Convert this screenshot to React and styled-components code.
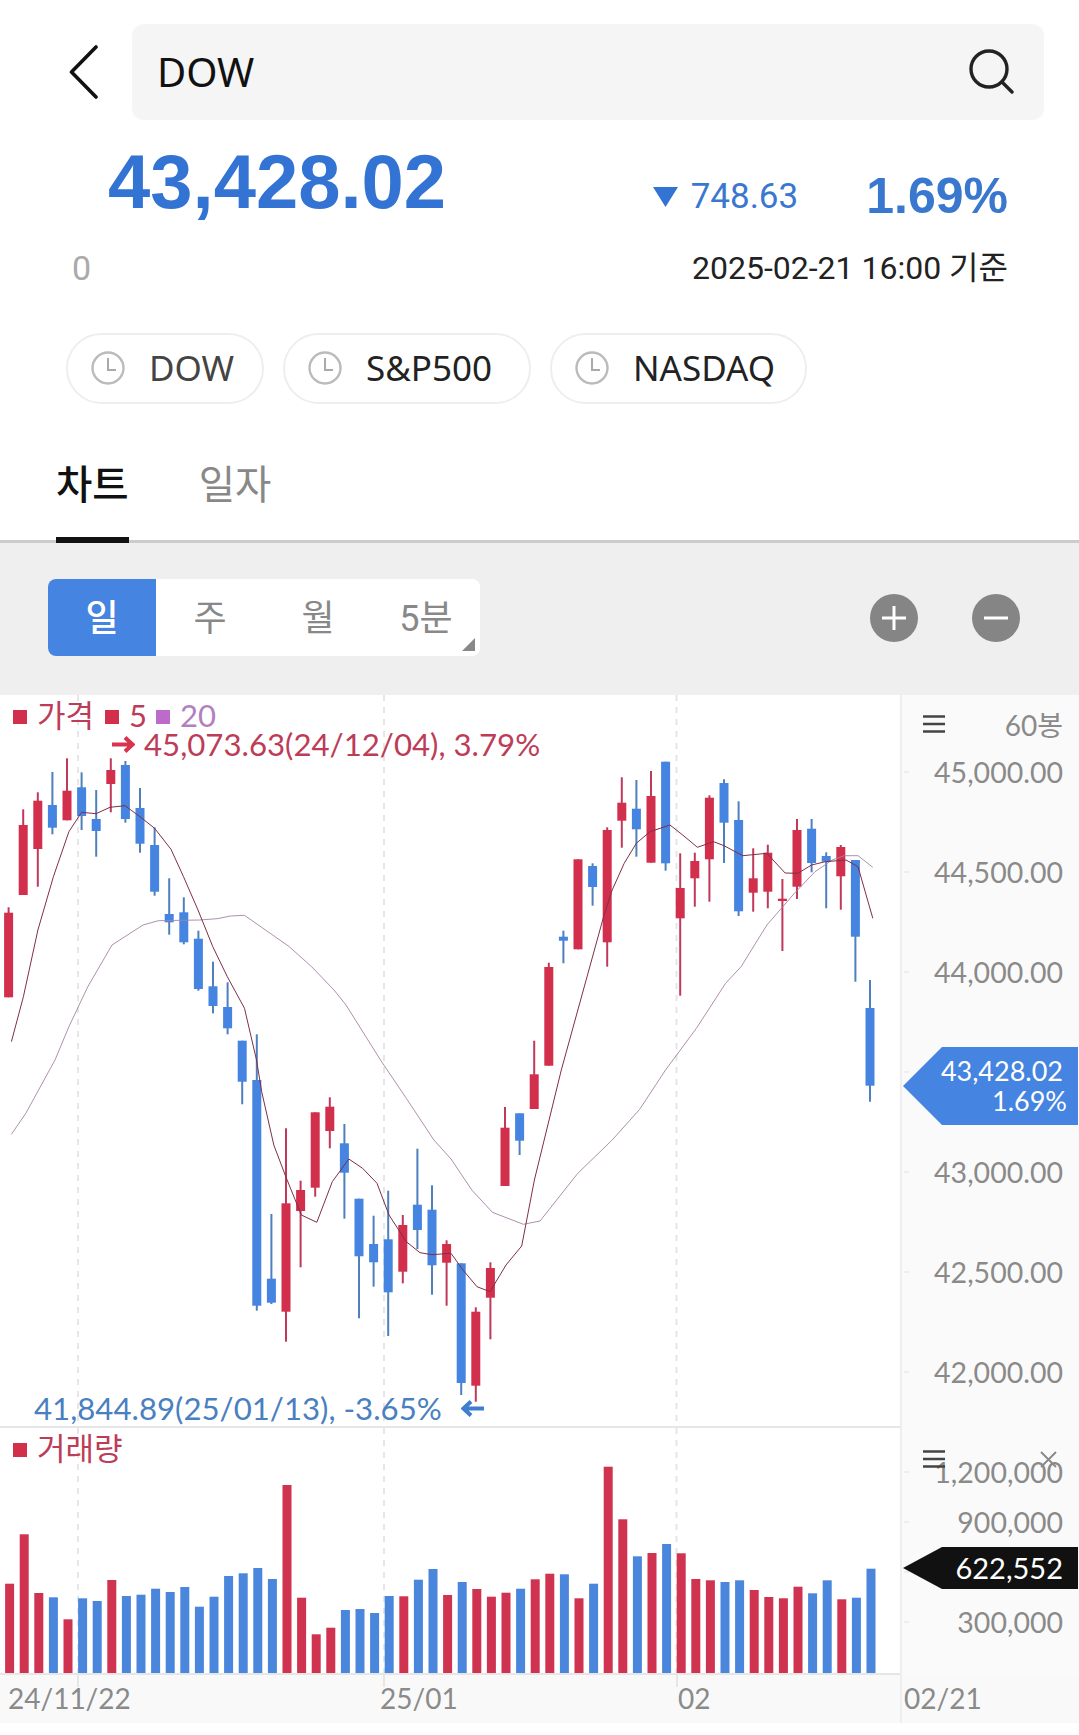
import React from 'react';
import styled, { createGlobalStyle } from 'styled-components';

const BLUE = '#4584e0';
const RED = '#d22f4d';
const INK_BLUE = '#3373d3';

const GlobalStyle = createGlobalStyle`
  * { box-sizing: border-box; }
  html, body { margin: 0; padding: 0; background: #ffffff; }
  body { font-family: Roboto, "Noto Sans CJK KR", sans-serif; }
`;

const Page = styled.div`
  width: 1079px;
  height: 1735px;
  overflow: hidden;
  background: #ffffff;
`;

//HEADER
const Header = styled.div`
  display: flex;
  align-items: center;
  gap: 34px;
  padding: 24px 35px 0 69px;
`;

const SearchBox = styled.div`
  flex: 1;
  height: 96px;
  display: flex;
  align-items: center;
  justify-content: space-between;
  padding: 0 30px 2px 25px;
  background: #f5f5f5;
  border-radius: 12px;
  font-family: "Noto Sans", sans-serif;
  font-size: 40px;
  color: #111111;
`;

//PRICE
const PriceRow = styled.div`
  height: 110px;
  display: flex;
  align-items: flex-start;
  padding: 0 71px 0 108px;
`;

const BigPrice = styled.div`
  margin-top: 24px;
  font-family: "Liberation Sans", sans-serif;
  font-size: 76px;
  line-height: 1;
  font-weight: 700;
  color: ${INK_BLUE};
`;

const DownMark = styled.svg`
  margin: 67px 13px 0 auto;
`;

const Change = styled.div`
  margin-top: 59px;
  font-size: 35px;
  line-height: 1;
  color: #3a78d0;
`;

const Percent = styled.div`
  margin: 51px 0 0 68px;
  font-family: "Liberation Sans", sans-serif;
  font-size: 50px;
  line-height: 1;
  font-weight: 700;
  color: #3a78d0;
`;

const StatusRow = styled.div`
  margin-top: 22px;
  height: 31px;
  display: flex;
  justify-content: space-between;
  padding: 0 71px 0 72px;
  font-size: 32px;
  line-height: 1;
  color: #222222;
`;

const Zero = styled.span`
  margin-top: -1px;
  font-size: 34px;
  color: #aaaaaa;
`;

//PILLS
const PillRow = styled.div`
  margin-top: 50px;
  display: flex;
  gap: 19px;
  padding-left: 66px;
`;

const Pill = styled.div`
  width: ${props => props.$w}px;
  height: 71px;
  display: flex;
  align-items: center;
  gap: 24px;
  padding: 0 0 2px 23px;
  border: 2px solid #eeeeee;
  border-radius: 36px;
  font-family: "Noto Sans", sans-serif;
  font-size: 35px;
  color: ${props => props.$dim ? '#444444' : '#222222'};
`;

//TABS
const Tabs = styled.div`
  height: 139px;
  display: flex;
  gap: 70px;
  padding-left: 56px;
  border-bottom: 3px solid #cccccc;
`;

const Tab = styled.div`
  height: 139px;
  padding-top: 60px;
  font-size: 39.5px;
  line-height: 44px;
  font-weight: ${props => props.$active ? 500 : 400};
  color: ${props => props.$active ? '#111111' : '#888888'};
  border-bottom: ${props => props.$active ? '6px solid #111111' : 'none'};
`;

//TOOLBAR
const Toolbar = styled.div`
  height: 152px;
  display: flex;
  align-items: flex-start;
  justify-content: space-between;
  padding: 36px 59px 0 48px;
  background: #efefef;
`;

const Segments = styled.div`
  position: relative;
  width: 432px;
  height: 77px;
  display: flex;
  border-radius: 8px;
  overflow: hidden;
  background: #ffffff;

  &::after {
    content: '';
    position: absolute;
    right: 5px;
    bottom: 5px;
    width: 0;
    height: 0;
    border-left: 13px solid transparent;
    border-bottom: 13px solid #888888;
  }
`;

const Segment = styled.div`
  width: 108px;
  display: flex;
  align-items: center;
  justify-content: center;
  font-size: 36px;
  padding-bottom: 5px;
  background: ${props => props.$active ? BLUE : 'transparent'};
  color: ${props => props.$active ? '#ffffff' : '#888888'};
  font-weight: ${props => props.$active ? 500 : 400};
`;

const ZoomButtons = styled.div`
  display: flex;
  gap: 54px;
  padding-top: 15px;
`;

const ZoomButton = styled.div`
  width: 48px;
  height: 48px;
  border-radius: 50%;
  background: #858585;
  display: flex;
  align-items: center;
  justify-content: center;
`;

//CHART
const Chart = styled.div`
  display: grid;
  grid-template-columns: 900px 179px;
  grid-template-rows: 733px 247px 48px;
  font-family: Lato, "Noto Sans CJK KR", sans-serif;
`;

const Plot = styled.div`
  position: relative;
  border-bottom: 2px solid #e6e6e6;

  svg { display: block; }
`;

const Axis = styled.div`
  position: relative;
  padding-top: ${props => props.$pad}px;
  background: #fafafa;
  border-left: 2px solid #eeeeee;
`;

const AxisTick = styled.div`
  position: relative;
  height: ${props => props.$h}px;
  display: flex;
  align-items: center;
  justify-content: flex-end;
  padding-right: 16px;
  font-size: 28.5px;
  color: #8a8a8a;

  &::before {
    content: '';
    position: absolute;
    left: 2px;
    top: 50%;
    width: 5px;
    height: 2px;
    margin-top: -1px;
    background: #eeeeee;
  }
`;

const AxisHead = styled.div`
  position: absolute;
  left: 21px;
  right: ${props => props.$right}px;
  top: ${props => props.$top}px;
  height: 24px;
  display: flex;
  align-items: center;
  justify-content: space-between;
  font-size: 28px;
  color: #8a8a8a;
`;

const PriceTag = styled.div`
  position: absolute;
  left: 1px;
  top: ${props => props.$top}px;
  width: 175px;
  height: ${props => props.$h}px;
  padding-right: 15px;
  display: flex;
  flex-direction: column;
  align-items: flex-end;
  justify-content: center;
  background: ${props => props.$bg};
  clip-path: polygon(0 50%, 39px 0, 100% 0, 100% 100%, 39px 100%);
  color: #ffffff;
  font-size: ${props => props.$size}px;
  line-height: 30px;
`;

const TagPercent = styled.span`
  margin-right: -4px;
`;

const Legend = styled.div`
  position: absolute;
  left: 13px;
  top: 3px;
  display: flex;
  align-items: center;
  font-size: 31px;
  line-height: 34px;
  color: #bd3c58;
`;

const LegendMark = styled.i`
  width: 14px;
  height: 14px;
  margin: 4px 10px 0 ${props => props.$gap || 0}px;
  background: ${props => props.$color};
`;

const LegendText = styled.span`
  color: ${props => props.$color || 'inherit'};
`;

const PeakLabel = styled.div`
  position: absolute;
  left: ${props => props.$left}px;
  top: ${props => props.$top}px;
  display: flex;
  align-items: center;
  gap: ${props => props.$gap}px;
  font-size: 31.2px;
  line-height: 34px;
  white-space: nowrap;
  color: ${props => props.$color};
`;

const TimeAxis = styled.div`
  position: relative;
  background: #f9f9f9;
  font-size: 28px;
  color: #8a8a8a;
`;

const TimeLabel = styled.span`
  position: absolute;
  left: ${props => props.$x}px;
  top: 6px;
  line-height: 34px;
`;

const TimeGrid = styled.i`
  position: absolute;
  left: ${props => props.$x}px;
  top: 0;
  width: 2px;
  height: 12px;
  background: #e6e6e6;
`;

const EndAxis = styled(TimeAxis)`
  border-left: 2px solid #eeeeee;
`;

const EndLabel = styled(TimeLabel)`
  left: 2px;
`;

// [colour, wick top, body top, body bottom, wick bottom], in page pixels
const candles = [
  ['r', 907.3, 912.7, 997.3, 997.3], ['r', 809.3, 825, 895, 895], ['r', 792.3, 800.7, 849, 886.7],
  ['b', 772, 805, 827.7, 834.3], ['r', 758.3, 790.7, 820.3, 820.3], ['b', 772.3, 787.3, 816, 830],
  ['b', 790, 819, 831, 856.7], ['r', 758.3, 770, 784, 812.3], ['b', 761, 765, 819, 822.7],
  ['b', 788, 808, 843.7, 852.7], ['b', 827.3, 845, 891.7, 895.7], ['b', 878.3, 914, 922.3, 934.7],
  ['b', 897.3, 912.3, 942.3, 944.3], ['b', 930.7, 938.7, 989, 990.7], ['b', 961.7, 986.3, 1006, 1013.3],
  ['b', 982.3, 1007, 1028.3, 1034.3], ['b', 1040.7, 1040.7, 1081.7, 1104.3], ['b', 1034.3, 1080, 1305.7, 1310.7],
  ['b', 1214, 1278.7, 1302.7, 1304], ['r', 1128.3, 1203.3, 1311.7, 1341.7], ['r', 1180.7, 1190, 1211, 1267.3],
  ['r', 1112.3, 1112.3, 1187.7, 1196.7], ['r', 1097.3, 1106.7, 1131, 1148.3], ['b', 1124, 1143.3, 1172.7, 1218.7],
  ['b', 1198.7, 1198.7, 1256.3, 1318.3], ['b', 1215.7, 1244, 1262.3, 1286.7], ['b', 1190.7, 1239.3, 1292.3, 1336],
  ['r', 1215, 1225, 1271.7, 1283.3], ['b', 1148.7, 1204.7, 1230, 1249], ['b', 1185.3, 1209.7, 1265.3, 1294.7],
  ['r', 1240.3, 1244, 1262.7, 1305.7], ['b', 1263.3, 1263.3, 1383, 1395], ['r', 1307.3, 1311.7, 1385.7, 1401.7],
  ['r', 1262.3, 1268, 1297.7, 1339.3], ['r', 1107, 1127.7, 1186, 1186], ['b', 1113.3, 1113.3, 1140.7, 1155],
  ['r', 1040.7, 1074.3, 1109, 1109], ['r', 962.7, 967, 1065.7, 1065.7], ['b', 930.7, 936.7, 940.7, 963.3],
  ['r', 859.3, 859.3, 949.3, 949.3], ['b', 863.3, 866, 887, 905.7], ['r', 827.3, 830, 942.3, 966.7],
  ['r', 777.3, 802.7, 820.7, 847.7], ['b', 780, 808.7, 829.3, 856.7], ['r', 771, 796, 862.7, 862.7],
  ['b', 761.7, 761.7, 863.3, 870.7], ['r', 853.3, 888, 918.3, 995.7], ['r', 852.7, 861, 878.3, 906.7],
  ['r', 795.3, 797.7, 859.3, 901.7], ['b', 779.3, 783, 822.7, 863], ['b', 801.3, 820, 911.3, 916],
  ['r', 848.3, 878.3, 892.7, 911.7], ['r', 844.7, 852.7, 891.7, 908.3], ['r', 879, 898.7, 901, 951],
  ['r', 819, 830, 886.7, 899], ['b', 819, 828.7, 863, 872.3], ['b', 852.3, 856, 861.7, 908.3],
  ['r', 845, 847, 876.3, 909.7], ['b', 860, 860, 936.7, 981.7], ['b', 980, 1008, 1085.7, 1101.7],
];

const ma5 = '11.4,1041.7 23.4,996.7 37.9,930 53.4,876.7 68.9,831.7 81.6,812.3 96,813.7 110,807.3 125,805.7 140,816.7 154.6,828.3 171,849.3 183.5,876.7 198,910 212.8,946.7 227.3,976.7 244.5,1008.3 256.5,1060 261.7,1091.7 273.8,1145 285.8,1176.7 301.3,1215 316.8,1222.3 332.3,1181.7 348.8,1159 362.6,1168.3 377,1183.3 389,1215 406.3,1241.7 420,1252.7 432,1254.7 451,1253.3 463,1270 477,1286.7 490,1291.7 506,1265 521.7,1246 534.4,1180 561.3,1070 603.6,916.7 612.2,890 624.2,863.3 636.3,843.3 650,831.7 670,825 682.7,835 697.4,847.3 713.6,841.7 724,845.7 742.8,855.7 766.9,853.3 785.1,873 797.8,873.3 811.6,865 825.3,861.7 846,860 858,866.7 872.8,918.3';

const ma20 = '11.4,1134.3 25.8,1113.3 55,1060 68.9,1026.7 87.8,986.7 112,945 143,925 158.4,920.7 199.7,920 217,918.7 230.7,916 244.5,915.3 289.3,946.7 311.6,966.7 334,990 346,1005 380.5,1060 406.3,1098.3 433.9,1140 451,1159 471.8,1190 492.4,1212.3 523.4,1224.3 540,1221 577.8,1173.3 612.2,1140 639.7,1109.3 665.5,1070 696.4,1028.3 725.6,983.3 741.1,966.7 766.9,925 794.4,893.3 815,871.7 832.2,860 844.2,855.7 858,855.7 872.8,867.3';

// [colour, bar top]
const volumes = [
  ['r', 1583.7], ['r', 1534.3], ['r', 1593], ['b', 1597.3], ['r', 1619.3], ['b', 1598.3], ['b', 1601], ['r', 1580],
  ['b', 1596], ['b', 1594.7], ['b', 1588.7], ['b', 1592], ['b', 1587], ['b', 1606.7], ['b', 1596.7], ['b', 1576],
  ['b', 1573.3], ['b', 1568], ['b', 1579], ['r', 1485], ['r', 1597.7], ['r', 1634.3], ['r', 1627.7], ['b', 1610],
  ['b', 1609], ['b', 1613], ['b', 1596], ['r', 1596.3], ['b', 1579.7], ['b', 1569], ['r', 1595], ['b', 1582],
  ['r', 1589], ['r', 1596.7], ['r', 1592.7], ['b', 1588.7], ['r', 1579.3], ['r', 1573.7], ['b', 1574.3], ['r', 1598.3],
  ['b', 1583.7], ['r', 1466.7], ['r', 1519.3], ['b', 1556.3], ['r', 1553], ['b', 1544], ['r', 1553.3], ['r', 1579],
  ['r', 1580.3], ['b', 1582], ['b', 1580.3], ['r', 1590], ['r', 1597], ['r', 1598.3], ['r', 1586.7], ['b', 1593.3],
  ['b', 1580.3], ['r', 1599.3], ['b', 1597.7], ['b', 1568.7],
];

const gridX = [78, 384, 676.5];
const step = 14.6;

const BackIcon = () => (
  <svg width="29" height="54" viewBox="0 0 29 54" fill="none" stroke="#111" strokeWidth="3.6" strokeLinecap="round" strokeLinejoin="round">
    <path d="M27 2 L2.5 27 L27 52" />
  </svg>
);

const SearchIcon = () => (
  <svg width="46" height="46" viewBox="0 0 46 46" fill="none" stroke="#222" strokeWidth="3.4" strokeLinecap="round">
    <circle cx="21" cy="21" r="18" />
    <path d="M34 34 L44 44" />
  </svg>
);

const ClockIcon = () => (
  <svg width="34" height="36" viewBox="0 0 34 36" fill="none" stroke="#bbbbbb" strokeWidth="2.4">
    <circle cx="17" cy="18" r="15.5" />
    <path d="M17 8 V20 H25" stroke="#aaaaaa" strokeWidth="2" />
  </svg>
);

const MenuIcon = () => (
  <svg width="22" height="18" viewBox="0 0 22 18" stroke="#444" strokeWidth="2.4">
    <path d="M0 1.5 H22 M0 9 H22 M0 16.5 H22" />
  </svg>
);

const CloseIcon = () => (
  <svg width="17" height="17" viewBox="0 0 17 17" stroke="#888" strokeWidth="1.8">
    <path d="M1 1 L16 16 M16 1 L1 16" />
  </svg>
);

const ArrowIcon = ({ color, flip }) => (
  <svg width="23" height="17" viewBox="0 0 23 17" fill="none" stroke={color} strokeWidth="4" transform={flip ? 'scale(-1 1)' : undefined}>
    <path d="M0 8.5 H20 M13 1.5 L20.5 8.5 L13 15.5" />
  </svg>
);

const CandleChart = () => (
  <svg width="900" height="731" viewBox="0 695 900 731">
    {gridX.map(x => (
      <line key={x} x1={x} x2={x} y1="695" y2="1426" stroke="#e6e6e6" strokeWidth="2" strokeDasharray="6 6" />
    ))}
    {candles.map(([c, wt, bt, bb, wb], i) => {
      const x = 8.6 + i * step;
      return (
        <g key={i}>
          <rect x={x - 1} y={wt} width="2" height={wb - wt} fill={c === 'r' ? '#c0395a' : '#4f80bd'} />
          <rect x={x - 4.5} y={bt} width="9" height={bb - bt} fill={c === 'r' ? RED : BLUE} />
        </g>
      );
    })}
    <polyline points={ma20} fill="none" stroke="#a583a3" strokeWidth="0.9" />
    <polyline points={ma5} fill="none" stroke="#7f2f45" strokeWidth="1" />
  </svg>
);

const VolumeChart = () => (
  <svg width="900" height="245" viewBox="0 1428 900 245">
    {gridX.map(x => (
      <line key={x} x1={x} x2={x} y1="1428" y2="1673" stroke="#e6e6e6" strokeWidth="2" strokeDasharray="6 6" />
    ))}
    {volumes.map(([c, top], i) => (
      <rect key={i} x={5.1 + i * step} y={top} width="9" height={1673 - top} fill={c === 'r' ? '#cf334f' : '#4a86dc'} />
    ))}
  </svg>
);

export default function App() {
  return (
    <Page>
      <GlobalStyle />
      <Header>
        <BackIcon />
        <SearchBox>
          DOW
          <SearchIcon />
        </SearchBox>
      </Header>

      <PriceRow>
        <BigPrice>43,428.02</BigPrice>
        <DownMark width="25" height="20" viewBox="0 0 25 20">
          <path d="M0 0 H25 L12.5 20 Z" fill="#3373d3" />
        </DownMark>
        <Change>748.63</Change>
        <Percent>1.69%</Percent>
      </PriceRow>
      <StatusRow>
        <Zero>0</Zero>
        <span>2025-02-21 16:00 기준</span>
      </StatusRow>

      <PillRow>
        <Pill $dim $w={198}><ClockIcon />DOW</Pill>
        <Pill $w={248}><ClockIcon />S&amp;P500</Pill>
        <Pill $w={257}><ClockIcon />NASDAQ</Pill>
      </PillRow>

      <Tabs>
        <Tab $active>차트</Tab>
        <Tab>일자</Tab>
      </Tabs>

      <Toolbar>
        <Segments>
          <Segment $active>일</Segment>
          <Segment>주</Segment>
          <Segment>월</Segment>
          <Segment>5분</Segment>
        </Segments>
        <ZoomButtons>
          <ZoomButton>
            <svg width="24" height="24" viewBox="0 0 24 24" stroke="#fff" strokeWidth="3"><path d="M0 12 H24 M12 0 V24" /></svg>
          </ZoomButton>
          <ZoomButton>
            <svg width="24" height="24" viewBox="0 0 24 24" stroke="#fff" strokeWidth="3"><path d="M0 12 H24" /></svg>
          </ZoomButton>
        </ZoomButtons>
      </Toolbar>

      <Chart>
        <Plot>
          <CandleChart />
          <Legend>
            <LegendMark $color={RED} />
            가격
            <LegendMark $color={RED} $gap={11} />
            5
            <LegendMark $color="#bb6bc9" $gap={9} />
            <LegendText $color="#b280c0">20</LegendText>
          </Legend>
          <PeakLabel $left={112} $top={32} $gap={9} $color="#bd3c58">
            <ArrowIcon color="#d8344f" />
            45,073.63(24/12/04), 3.79%
          </PeakLabel>
          <PeakLabel $left={34} $top={696} $gap={19} $color="#4a7fc0">
            41,844.89(25/01/13), -3.65%
            <ArrowIcon color="#3f7dd0" flip />
          </PeakLabel>
        </Plot>
        <Axis $pad={27}>
          <AxisHead $top={17} $right={16}>
            <MenuIcon />
            60봉
          </AxisHead>
          <AxisTick $h={100}>45,000.00</AxisTick>
          <AxisTick $h={100}>44,500.00</AxisTick>
          <AxisTick $h={100}>44,000.00</AxisTick>
          <AxisTick $h={100} />
          <AxisTick $h={100}>43,000.00</AxisTick>
          <AxisTick $h={100}>42,500.00</AxisTick>
          <AxisTick $h={100}>42,000.00</AxisTick>
          <PriceTag $top={352} $h={78} $bg={BLUE} $size={27}>
            <span>43,428.02</span>
            <TagPercent>1.69%</TagPercent>
          </PriceTag>
        </Axis>

        <Plot>
          <VolumeChart />
          <Legend>
            <LegendMark $color={RED} />
            거래량
          </Legend>
        </Plot>
        <Axis $pad={19}>
          <AxisTick $h={50}>1,200,000</AxisTick>
          <AxisTick $h={50}>900,000</AxisTick>
          <AxisTick $h={50} />
          <AxisTick $h={50}>300,000</AxisTick>
          <AxisHead $top={19} $right={22}>
            <MenuIcon />
            <CloseIcon />
          </AxisHead>
          <PriceTag $top={119} $h={42} $bg="#111111" $size={29}>622,552</PriceTag>
        </Axis>

        <TimeAxis>
          {gridX.map(x => <TimeGrid key={x} $x={x - 1} />)}
          <TimeLabel $x={8}>24/11/22</TimeLabel>
          <TimeLabel $x={380}>25/01</TimeLabel>
          <TimeLabel $x={678}>02</TimeLabel>
        </TimeAxis>
        <EndAxis>
          <EndLabel>02/21</EndLabel>
        </EndAxis>
      </Chart>
    </Page>
  );
}
